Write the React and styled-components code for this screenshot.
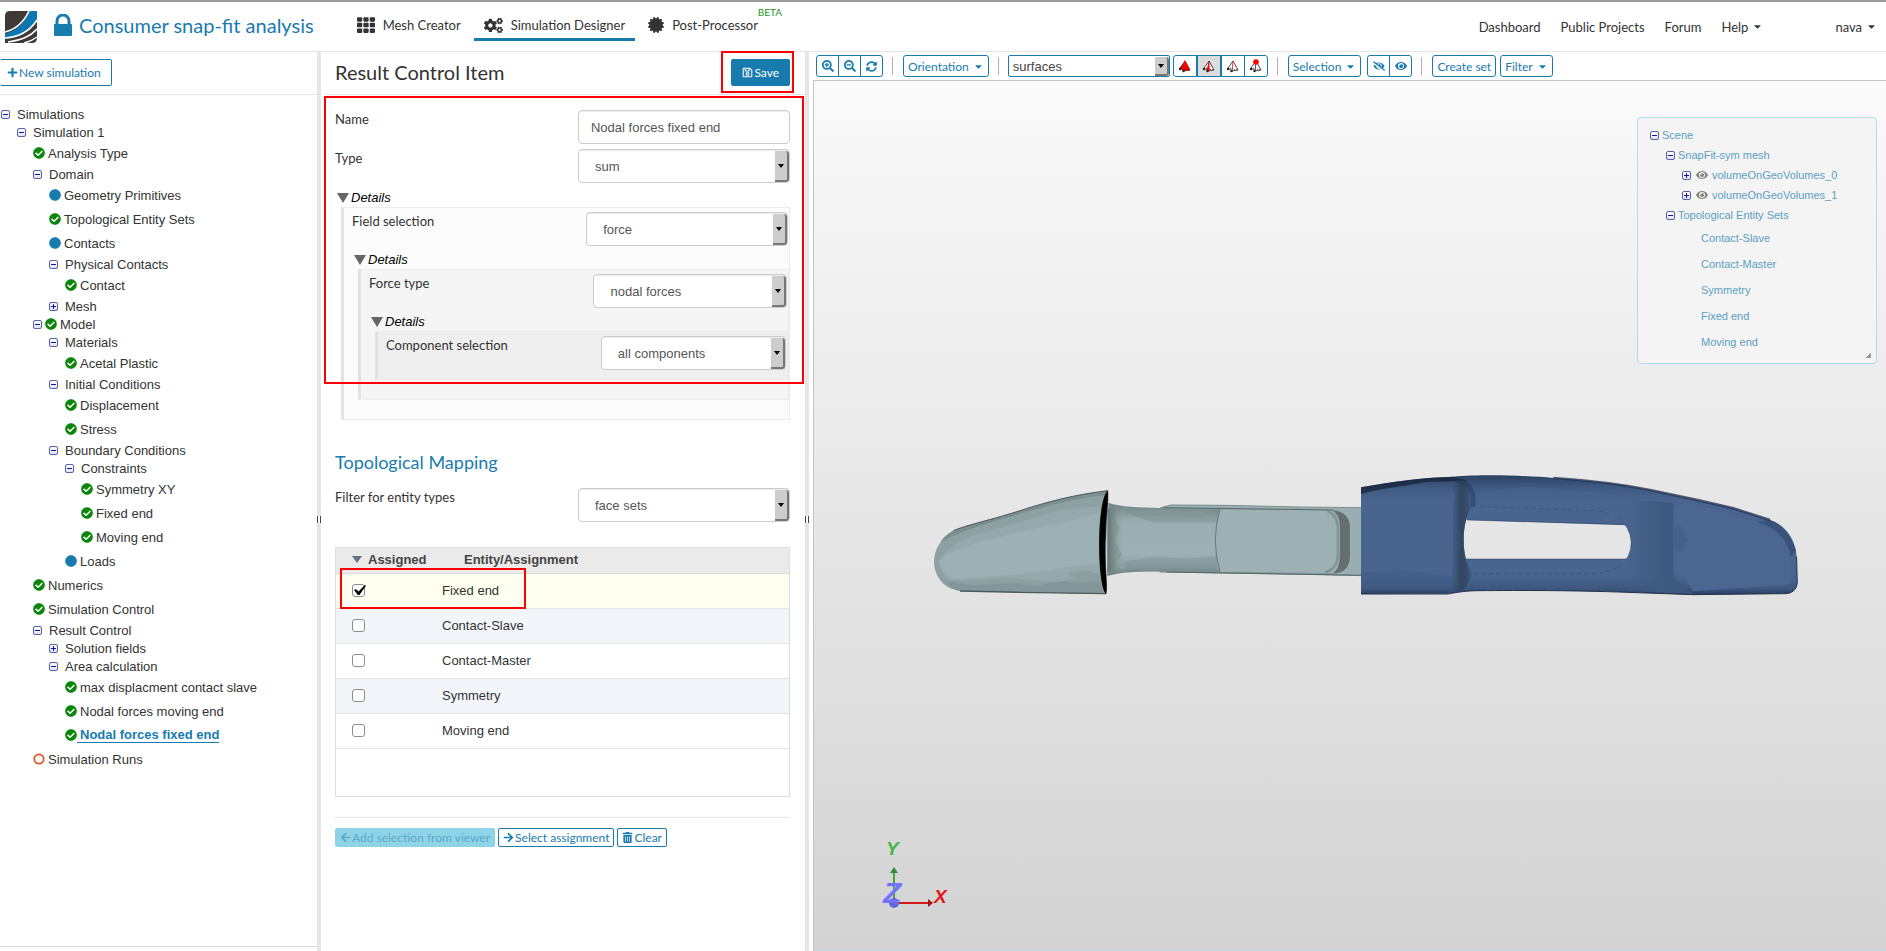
import { useState } from "react";
import styled, { createGlobalStyle, css } from "styled-components";
import {
  FaArrowLeft,
  FaArrowRight,
  FaCaretDown,
  FaCertificate,
  FaCheckCircle,
  FaCircle,
  FaCogs,
  FaEye,
  FaEyeSlash,
  FaPlus,
  FaRegSave,
  FaSearchMinus,
  FaSearchPlus,
  FaSyncAlt,
  FaTh,
  FaTrashAlt,
} from "react-icons/fa";

const BLUE = "#187bae";
const LINE = "#e5e5e5";
const SANS = `"Liberation Sans", Arial, sans-serif`;
const LATO = `Lato, "Open Sans", sans-serif`;

const GlobalStyle = createGlobalStyle`
  *, *::before, *::after { box-sizing: border-box; }
  body {
    margin: 0;
    background: #fff;
    color: #333;
    font-family: ${SANS};
    font-size: 13px;
  }
  button, input, select { font: inherit; margin: 0; }
  a { color: inherit; text-decoration: none; }
  h1, h2, ul { margin: 0; padding: 0; font-weight: normal; }
  ul { list-style: none; }
  svg { display: block; flex: none; }
`;

const Page = styled.div`
  display: flex;
  flex-direction: column;
  min-height: 100vh;
`;

/* ---------- header ---------- */

const Header = styled.header`
  display: flex;
  align-items: center;
  height: 52px;
  padding: 0 9px 0 5px;
  border-top: 2px solid #999;
  border-bottom: 1px solid ${LINE};
  font-family: ${LATO};
  font-size: 13px;
`;

const ProjectTitle = styled.h1`
  display: flex;
  align-items: center;
  gap: 7px;
  margin-left: 17px;
  padding-bottom: 3px;
  color: ${BLUE};
  font-size: 20px;
`;

const MainNav = styled.nav`
  display: flex;
  gap: 3px;
  margin-left: 33px;
`;

const NavTab = styled.a`
  position: relative;
  display: flex;
  align-items: center;
  gap: 8px;
  height: 29px;
  padding: 0 10px;
  border-bottom: 3px solid ${(props) => (props.$active ? BLUE : "transparent")};
`;

const Beta = styled.sup`
  position: absolute;
  top: -6px;
  right: -14px;
  color: #1f961f;
  font-size: 10px;
  line-height: 12px;
`;

const UserNav = styled.nav`
  display: flex;
  gap: 20px;
  margin-left: auto;
`;

const UserLink = styled.a`
  display: flex;
  align-items: center;
  gap: 4px;

  &:last-child {
    margin-left: 52px;
  }
`;

/* ---------- columns ---------- */

const Main = styled.main`
  display: flex;
  flex: 1;
`;

const Sidebar = styled.aside`
  display: flex;
  flex-direction: column;
  flex: 0 0 317px;
`;

const SidebarTop = styled.div`
  display: flex;
  align-items: center;
  height: 43px;
  padding-bottom: 1px;
  border-bottom: 1px solid ${LINE};
`;

const SidebarBottom = styled.div`
  height: 5px;
  margin-top: auto;
  border-top: 1px solid #d6d6d6;
`;

const Splitter = styled.div`
  display: flex;
  align-items: center;
  flex: 0 0 4px;
  background: #e6e6e6;

  &::after {
    content: "";
    width: 4px;
    height: 7px;
    margin-top: 36px;
    border: solid #444;
    border-width: 0 1px;
    background: #fff;
  }
`;

const Button = styled.button`
  display: inline-flex;
  align-items: center;
  justify-content: center;
  gap: 1px;
  height: 27px;
  padding: 0 10px;
  border: 1px solid ${BLUE};
  border-radius: 2px;
  background: ${(props) => (props.$primary ? BLUE : "#fff")};
  color: ${(props) => (props.$primary ? "#fff" : BLUE)};
  font-family: ${LATO};
  font-size: 12px;
  white-space: nowrap;

  ${(props) =>
    props.$small &&
    css`
      height: 19px;
      padding: 0 4px;
    `}

  &:disabled {
    border-color: #8fd3e7;
    background: #8fd3e7;
    color: #5aa9cb;
  }
`;

const NewSimulation = styled(Button)`
  padding-left: 7px;
  border-left: 0;
`;

/* ---------- tree ---------- */

const TreeList = styled.ul`
  padding-top: 10px;
`;

const TreeRow = styled.li`
  display: flex;
  align-items: center;
  height: ${(props) => (props.$leaf ? 24 : 18)}px;
  padding-left: ${(props) => props.$level * 16 + 1}px;
  white-space: nowrap;
`;

const TreeLabel = styled.a`
  margin-left: ${(props) => (props.$wide ? 7 : 3)}px;

  ${(props) =>
    props.$selected &&
    css`
      margin-left: 0;
      padding-left: 3px;
      color: ${BLUE};
      font-weight: bold;
      border-bottom: 1px solid ${BLUE};
    `}
`;

const ToggleButton = styled.button`
  position: relative;
  width: 9px;
  height: 9px;
  padding: 0;
  border: 1px solid #5560b0;
  border-radius: 2px;
  background: linear-gradient(#fff, #dfe3ec);

  &::before,
  &::after {
    content: "";
    position: absolute;
    top: 3px;
    left: 1px;
    width: 5px;
    height: 1px;
    background: #1414a8;
  }

  &::after {
    display: ${(props) => (props.$open ? "none" : "block")};
    top: 1px;
    left: 3px;
    width: 1px;
    height: 5px;
  }
`;

const StatusIcon = styled.span`
  display: flex;
  color: ${(props) => props.$color};
  margin-left: ${(props) => (props.$afterToggle ? 3 : 0)}px;
`;

/* ---------- control item form ---------- */

const Editor = styled.section`
  flex: 0 0 484px;
  padding-bottom: 40px;
`;

const EditorTop = styled.div`
  display: flex;
  align-items: center;
  justify-content: space-between;
  height: 43px;
  margin-left: 4px;
  padding: 0 15px 1px 10px;
  border-bottom: 1px solid ${LINE};
`;

const EditorTitle = styled.h2`
  padding-bottom: 1px;
  font-family: ${LATO};
  font-size: 20px;
`;

const Highlight = styled.span`
  position: absolute;
  inset: ${(props) => props.$inset};
  border: 2px solid #f00;
  pointer-events: none;
`;

const Anchor = styled.div`
  position: relative;
  display: flex;
`;

const EditorBody = styled.div`
  padding: 15px 15px 0 14px;
`;

const Form = styled.div`
  position: relative;
`;

const FieldRow = styled.div`
  display: flex;
  justify-content: space-between;
  align-items: flex-start;

  & + & {
    margin-top: 5px;
  }
`;

const FieldLabel = styled.label`
  font-family: ${LATO};
  font-size: 13px;
  line-height: 18px;
`;

const fieldBox = css`
  height: 34px;
  border: 1px solid #ccc;
  border-radius: 4px;
  background: #fff;
  color: #555;
  box-shadow: inset 0 1px 1px rgba(0, 0, 0, 0.08);
`;

const TextField = styled.input`
  ${fieldBox}
  width: 46.6%;
  padding: 0 12px;
`;

const SelectWrap = styled.div`
  position: relative;
  width: 46.6%;
`;

const SelectBox = styled.select`
  ${fieldBox}
  display: block;
  width: 100%;
  padding: 0 20px 0 16px;
  appearance: none;
`;

const SelectArrow = styled.span`
  position: absolute;
  top: 2px;
  right: 1px;
  bottom: 1px;
  display: flex;
  align-items: center;
  justify-content: center;
  width: 14px;
  border: solid #777;
  border-width: 0 2px 2px 0;
  border-radius: 0 3px 3px 0;
  background: #cdcdcd;
  pointer-events: none;

  &::after {
    content: "";
    border: 3px solid transparent;
    border-top: 4px solid #000;
    border-bottom: 0;
  }
`;

const DetailsToggle = styled.button`
  display: flex;
  align-items: center;
  gap: 2px;
  height: 24px;
  padding: 6px 0 0 2px;
  border: 0;
  background: none;
  color: #000;
  font-style: italic;
  line-height: 18px;

  &::before {
    content: "";
    border: 6px solid transparent;
    border-top: 10px solid #666;
    border-bottom: 0;
  }
`;

const Nested = styled.div`
  margin-left: 6px;
  padding: 4px 1px ${(props) => (props.$depth === 3 ? 9 : 19)}px 8px;
  border: 1px solid #ececec;
  border-left: 3px solid #e2e2e2;
  background: ${(props) => ["#fff", "#fcfcfc", "#f5f5f5", "#efefef"][props.$depth]};

  & & {
    margin-right: -1px;
  }

  ${SelectWrap} {
    width: 46.3%;
  }

  ${DetailsToggle} {
    height: 23px;
    padding-top: 5px;
  }
`;

const SubTitle = styled.h2`
  margin: 31px 0 15px;
  color: ${BLUE};
  font-family: ${LATO};
  font-size: 18px;
  line-height: 22px;
`;

/* ---------- assignment table ---------- */

const TableFrame = styled.div`
  min-height: 250px;
  margin-top: 25px;
  border: 1px solid #ddd;
`;

const Table = styled.table`
  width: 100%;
  border-collapse: collapse;
  text-align: left;
`;

const HeadCell = styled.th`
  width: ${(props) => props.$width || "auto"};
  height: 25px;
  padding: 0 0 1px ${(props) => props.$pad}px;
  border-bottom: 1px solid #ddd;
  background: #eaeaea;
  color: #444;
`;

const SortButton = styled.button`
  display: flex;
  align-items: center;
  gap: 6px;
  padding: 0;
  border: 0;
  background: none;
  color: inherit;
  font-weight: bold;

  &::before {
    content: "";
    border: 5px solid transparent;
    border-top: 7px solid #667385;
    border-bottom: 0;
  }
`;

const BodyRow = styled.tr`
  height: 35px;
  border-bottom: 1px solid ${LINE};
  background: ${(props) => (props.$checked ? "#ffffef" : "#fff")};

  &:nth-child(even) {
    background: #f2f6fb;
  }
`;

const BodyCell = styled.td`
  position: relative;
  padding: 0 0 0 ${(props) => props.$pad}px;
`;

const CheckBox = styled.input`
  position: relative;
  display: block;
  width: 13px;
  height: 13px;
  appearance: none;
  border: 1px solid #8c8c8c;
  border-radius: 3px;
  background: #fff;

  &:checked::after {
    content: "";
    position: absolute;
    top: 0;
    left: 1px;
    width: 12px;
    height: 10px;
    background: #000;
    clip-path: polygon(0 50%, 15% 40%, 38% 65%, 90% 0, 100% 8%, 45% 100%, 32% 100%);
  }
`;

const Actions = styled.div`
  display: flex;
  gap: 3px;
  margin-top: 20px;
  padding-top: 10px;
  border-top: 1px solid ${LINE};
`;

/* ---------- viewer ---------- */

const Viewer = styled.section`
  display: flex;
  flex-direction: column;
  flex: 1;
  min-width: 0;
  padding-left: 4px;
`;

const Toolbar = styled.div`
  display: flex;
  align-items: center;
  height: 28px;
  padding: 0 3px;
`;

const ButtonGroup = styled.div`
  display: flex;
  margin-right: ${(props) => props.$space || 0}px;
`;

const ToolButton = styled.button`
  display: flex;
  align-items: center;
  justify-content: center;
  gap: 4px;
  height: 22px;
  min-width: ${(props) => props.$width || 23}px;
  padding: 0 ${(props) => (props.$text ? 4 : 0)}px;
  border: 1px solid ${BLUE};
  border-radius: 3px;
  background: ${(props) => (props.$pressed ? "#dcdcdc" : "#fff")};
  color: ${BLUE};
  font-family: ${LATO};
  font-size: 12px;
  white-space: nowrap;

  ${ButtonGroup} > & + & {
    margin-left: -1px;
  }
  ${ButtonGroup} > &:not(:first-child) {
    border-top-left-radius: 0;
    border-bottom-left-radius: 0;
  }
  ${ButtonGroup} > &:not(:last-child) {
    border-top-right-radius: 0;
    border-bottom-right-radius: 0;
  }
`;

const Divider = styled.span`
  width: 1px;
  height: 18px;
  margin: 0 10px 0 9px;
  background: #b9aeb2;
`;

const ModeWrap = styled.div`
  position: relative;
  width: 162px;
  margin: 0 3px 0 -1px;
`;

const ModeSelect = styled.select`
  display: block;
  width: 100%;
  height: 22px;
  padding: 0 20px 0 4px;
  border: 1px solid ${BLUE};
  border-radius: 2px;
  background: #fff;
  color: #444;
  appearance: none;
`;

const Canvas = styled.div`
  position: relative;
  flex: 1;
  border: solid #c4c4c4;
  border-width: 1px 0 0 1px;
  border-bottom: 1px solid #c3d9de;
  background: linear-gradient(#fafafa, #d3d3d3);
`;

const ModelView = styled.svg`
  position: absolute;
  width: 100%;
  height: 100%;
`;

const Axes = styled.svg`
  position: absolute;
  left: 66px;
  bottom: 39px;
  font-family: ${SANS};
`;

const ScenePanel = styled.div`
  position: absolute;
  top: 36px;
  right: 9px;
  width: 240px;
  padding: 7px 0 8px 12px;
  border: 1px solid #b5dbe7;
  border-radius: 4px;
  background: #f4f4f4;
  color: #5a9fc2;
  font-size: 11px;

  &::after {
    content: "";
    position: absolute;
    right: 5px;
    bottom: 5px;
    width: 6px;
    height: 6px;
    background: linear-gradient(135deg, transparent 50%, #999 50%);
  }
`;

const SceneRow = styled.li`
  display: flex;
  align-items: center;
  gap: 3px;
  height: ${(props) => (props.$leaf ? 26 : 20)}px;
  padding-left: ${(props) => props.$indent}px;
`;

const SceneEye = styled(FaEye)`
  margin: 0 1px 0 2px;
  color: #85857c;
`;

const TREE = [
  [0, "Simulations", "open"],
  [1, "Simulation 1", "open"],
  [2, "Analysis Type", null, "ok"],
  [2, "Domain", "open"],
  [3, "Geometry Primitives", null, "dot"],
  [3, "Topological Entity Sets", null, "ok"],
  [3, "Contacts", null, "dot"],
  [3, "Physical Contacts", "open"],
  [4, "Contact", null, "ok"],
  [3, "Mesh", "closed"],
  [2, "Model", "open", "ok"],
  [3, "Materials", "open"],
  [4, "Acetal Plastic", null, "ok"],
  [3, "Initial Conditions", "open"],
  [4, "Displacement", null, "ok"],
  [4, "Stress", null, "ok"],
  [3, "Boundary Conditions", "open"],
  [4, "Constraints", "open"],
  [5, "Symmetry XY", null, "ok"],
  [5, "Fixed end", null, "ok"],
  [5, "Moving end", null, "ok"],
  [4, "Loads", null, "dot"],
  [2, "Numerics", null, "ok"],
  [2, "Simulation Control", null, "ok"],
  [2, "Result Control", "open"],
  [3, "Solution fields", "closed"],
  [3, "Area calculation", "open"],
  [4, "max displacment contact slave", null, "ok"],
  [4, "Nodal forces moving end", null, "ok"],
  [4, "Nodal forces fixed end", null, "ok"],
  [2, "Simulation Runs", null, "empty"],
];

const RingIcon = ({ size }) => (
  <svg width={size} height={size} viewBox="0 0 12 12">
    <circle cx="6" cy="6" r="4.7" fill="none" stroke="currentColor" strokeWidth="1.8" />
  </svg>
);

const STATUS = {
  ok: { color: "#0a860a", Icon: FaCheckCircle },
  dot: { color: BLUE, Icon: FaCircle },
  empty: { color: "#e2572b", Icon: RingIcon },
};

const SETS = ["Contact-Slave", "Contact-Master", "Symmetry", "Fixed end", "Moving end"];
const ENTITIES = ["Fixed end", "Contact-Slave", "Contact-Master", "Symmetry", "Moving end"];

const Status = ({ type, afterToggle }) => {
  const { color, Icon } = STATUS[type];
  return (
    <StatusIcon $color={color} $afterToggle={afterToggle}>
      <Icon size={12} />
    </StatusIcon>
  );
};

const Toggle = ({ open, label }) => (
  <ToggleButton type="button" $open={open} aria-expanded={!!open} aria-label={label} />
);

const Logo = () => (
  <svg width="32" height="32" viewBox="0 0 32 32" aria-label="Logo">
    <path d="M5 0H32V27Q32 32 27 32H0V5Q0 0 5 0Z" fill="#403a37" />
    <path d="M24 0H32V9C25 21 14 27 0 28V23C12 19 20 12 24 0Z" fill="#0b76b0" />
    <path d="M24 0C19 11 12 18 0 21" fill="none" stroke="#fff" strokeWidth="1.6" />
    <path d="M32 9C25 20 14 26 0 27" fill="none" stroke="#fff" strokeWidth="1.6" />
    <path d="M32 18C25 26 16 29 3 31" fill="none" stroke="#fff" strokeWidth="1.6" />
    <path d="M32 26C28 29 24 31 19 32" fill="none" stroke="#fff" strokeWidth="1.4" />
  </svg>
);

// tetrahedron with the picked entity kind painted red
const Tetra = ({ mode }) => (
  <svg width="14" height="14" viewBox="0 0 14 14" fill="none" stroke="#222">
    <path d="M7 2L2 9L6 12L12 11Z" fill={mode === "volume" ? "#f00" : "#fff"} strokeWidth="0.8" />
    {mode === "volume" && <path d="M7 1L3 10L6 12L12 11Z" fill="#f00" stroke="none" />}
    {mode !== "volume" && <path d="M7 2L6 12" stroke={mode === "edge" ? "#f00" : "#222"} strokeWidth="0.8" />}
    <path d="M2 9L12 11" strokeDasharray="1 1" strokeWidth="0.8" />
    {mode === "face" && <path d="M7 2L4.5 11L8 12Z" fill="#f00" stroke="none" />}
    <circle cx="2" cy="10" r="1.2" fill="#222" stroke="none" />
    <circle cx="5.5" cy="12" r="1.2" fill="#222" stroke="none" />
    {mode === "point" && <circle cx="7" cy="3" r="2.8" fill="#f00" stroke="none" />}
  </svg>
);

const SelectField = ({ id, label, value }) => (
  <FieldRow>
    <FieldLabel htmlFor={id}>{label}</FieldLabel>
    <SelectWrap>
      <SelectBox id={id} defaultValue={value}>
        <option>{value}</option>
      </SelectBox>
      <SelectArrow />
    </SelectWrap>
  </FieldRow>
);

const SnapFitModel = () => (
  <ModelView viewBox="814 81 1072 869" role="img" aria-label="Snap fit mesh">
    <defs>
      <linearGradient id="shaft" x1="0" y1="0" x2="0" y2="1">
        <stop offset="0" stopColor="#6f8282" />
        <stop offset="0.13" stopColor="#849798" />
        <stop offset="0.26" stopColor="#9caeb2" />
        <stop offset="0.7" stopColor="#9db0b4" />
        <stop offset="0.88" stopColor="#8b9ea0" />
        <stop offset="1" stopColor="#687a7a" />
      </linearGradient>
      <linearGradient id="sleeve" x1="0" y1="0" x2="0" y2="1">
        <stop offset="0" stopColor="#2c4162" />
        <stop offset="0.1" stopColor="#3f5a82" />
        <stop offset="0.22" stopColor="#49658f" />
        <stop offset="0.84" stopColor="#48648f" />
        <stop offset="0.95" stopColor="#3d577f" />
        <stop offset="1" stopColor="#2a3e5d" />
      </linearGradient>
      <linearGradient id="bend" x1="0" y1="0" x2="1" y2="0">
        <stop offset="0" stopColor="#3f5a80" stopOpacity="0" />
        <stop offset="0.55" stopColor="#31455f" />
        <stop offset="0.8" stopColor="#36506f" />
        <stop offset="1" stopColor="#3f5a80" stopOpacity="0" />
      </linearGradient>
      <linearGradient id="hollow" x1="0" y1="0" x2="1" y2="0">
        <stop offset="0" stopColor="#3f5a80" stopOpacity="0" />
        <stop offset="0.5" stopColor="#3f5a80" />
        <stop offset="1" stopColor="#3d577c" />
      </linearGradient>
      <linearGradient id="neck" x1="0" y1="0" x2="1" y2="0">
        <stop offset="0" stopColor="#5f7272" />
        <stop offset="1" stopColor="#93a6a8" stopOpacity="0" />
      </linearGradient>
    </defs>

    <g transform="translate(920 460) scale(0.3333)">
      <path d="M720 144L752 135L920 136L1140 141L1325 143V347L1200 344L720 336Z" fill="#9aaeb2" stroke="#7c9090" strokeWidth="3" />
      <path d="M565 128C600 141 660 142 720 144L895 147L1240 150Q1290 155 1290 200V290Q1290 338 1240 341L960 339L740 335C680 333 600 335 562 348Z" fill="url(#shaft)" />
      <path d="M566 150L600 205L585 240L606 285L566 335Z" fill="#71878a" opacity="0.4" />
      <rect x="562" y="145" width="50" height="190" fill="url(#neck)" />
      <path d="M620 158L700 160L840 161L895 148V188H700Z" fill="#74898a" opacity="0.35" />
      <path d="M610 305L700 290L800 296L890 288V335H620Z" fill="#74898a" opacity="0.3" />
      <path d="M900 148L1240 151Q1288 155 1290 200V290Q1288 338 1240 340L900 336Q872 240 900 148Z" fill="#9db0b4" />
      <path d="M1236 151Q1288 155 1290 200V290Q1288 338 1240 340Q1258 325 1260 290V200Q1258 160 1236 151Z" fill="#64706f" />
      <path d="M1222 153Q1250 162 1254 200V290Q1250 328 1215 338" fill="none" stroke="#82969a" strokeWidth="8" />
      <path d="M900 148Q872 240 900 336" fill="none" stroke="#647878" strokeWidth="3" />
      <path d="M730 143L1240 150M740 336L1325 346" fill="none" stroke="#566868" strokeWidth="3" />

      <path d="M562 92C460 105 390 123 300 152C220 178 140 195 100 212C60 235 42 270 42 310C45 350 70 386 120 393L300 397L557 401Z" fill="#8da1a3" />
      <path d="M562 92C460 105 390 123 300 152C220 178 140 195 100 212C80 222 70 233 62 246C110 220 190 192 290 165C380 137 470 115 556 106Z" fill="#7b8f90" />
      <path d="M552 138L420 150L290 190L180 220Q100 245 70 285Q46 330 90 362L200 358L430 335L548 345Z" fill="#95a9ac" />
      <path d="M548 155L440 185L300 215L170 250Q95 272 58 300Q58 340 100 356L240 348L330 340L440 322L542 312Z" fill="#9db0b4" />
      <path d="M75 362L160 376L280 368L360 378L410 360L470 368L545 362L557 401L300 397L120 393Q95 388 75 362Z" fill="#83979a" />
      <path d="M240 350L430 325L480 352L410 366Z" fill="#95a9ac" />
      <path d="M440 338L500 330L545 345V365L480 366Z" fill="#8b9fa1" />
      <path d="M120 393L300 397L557 401" fill="none" stroke="#4b5b5b" strokeWidth="4" />
      <path d="M562 92C460 105 390 123 300 152C220 178 140 195 100 212" fill="none" stroke="#4b5b5b" strokeWidth="3" />
      <path d="M563 92C530 130 532 370 558 401C564 370 550 300 557 220C558 150 566 130 563 92Z" fill="#000" stroke="#000" strokeWidth="2" />
    </g>

    <g transform="translate(1340 460) scale(0.3333)">
      <path d="M380 138H760L870 190V196L380 180Z" fill="#49658f" />
      <path d="M375 297H860L820 345H385Z" fill="#49658f" />
      <path d="M380 180L860 194M375 297H860" stroke="#2c3f5e" strokeWidth="2" opacity="0.7" />
      <path
        fillRule="evenodd"
        fill="url(#sleeve)"
        d="M63 82C160 64 260 52 340 50C420 43 560 46 640 54C760 62 840 72 930 90L1080 122L1180 145L1290 180C1340 195 1368 245 1370 290L1372 370Q1368 398 1340 401L1060 404L860 397C700 391 540 391 420 392C380 392 350 397 325 401L63 402ZM398 139C362 180 362 300 398 341H750C830 341 872 305 873 248C872 195 830 155 760 152Z"
      />
      <path d="M870 120L1000 128V350L1060 402L860 394V320Q885 240 860 175Z" fill="url(#hollow)" />
      <path d="M1000 150L1040 126L1250 186Q1345 205 1352 290V374L1060 394L1030 350L1000 330Z" fill="#4a6691" />
      <path d="M1290 180Q1340 196 1368 270L1352 290Q1340 212 1250 186Z" fill="#38527a" />
      <path d="M1000 205L1020 195L1042 240L1025 280L1000 265Z" fill="#45608a" />
      <path d="M320 62L400 62C385 110 400 125 398 139C362 180 362 300 398 341L375 388L325 400C350 330 330 180 345 100Z" fill="url(#bend)" />
      <path d="M63 82C160 64 260 52 340 50L385 62L260 66L100 92L63 102Z" fill="#16233a" opacity="0.75" />
      <path d="M345 60Q410 70 398 139" fill="none" stroke="#263a58" strokeWidth="14" opacity="0.5" />
      <path d="M410 100L560 80L800 100L860 120L820 142L700 130L420 132Z" fill="#49658f" opacity="0.6" />
      <path d="M63 340L180 330L340 350L325 378L63 388Z" fill="#405b85" opacity="0.5" />
      <path d="M640 54C760 62 840 72 930 90L1080 122L1180 145L1290 180" fill="none" stroke="#253857" strokeWidth="8" opacity="0.8" />
      <path d="M398 139L760 152C830 155 872 195 873 248C872 305 830 341 750 341H398" fill="none" stroke="#22334d" strokeWidth="2" opacity="0.4" strokeDasharray="14 8" />
      <path d="M63 402H325C350 397 380 392 420 392C540 391 700 391 860 397L1060 404L1340 401Q1368 398 1372 370L1370 290" fill="none" stroke="#22334d" strokeWidth="3" />
    </g>
  </ModelView>
);

const AxesWidget = () => (
  <Axes width="76" height="80" viewBox="0 -10 76 80" fontSize="19" fontWeight="bold" fontStyle="italic">
    <path d="M14 62V31" stroke="#45a045" strokeWidth="2" />
    <path d="M10 32L14 26L18 32Z" fill="#3c8a3c" />
    <path d="M14 62H48" stroke="#d61a1a" strokeWidth="2" />
    <path d="M48 58L53 62L48 66Z" fill="#a51414" />
    <circle cx="14" cy="62" r="5" fill="#6464e0" />
    <text x="6" y="14" fill="#43b843">Y</text>
    <text x="54" y="62" fill="#e21818">X</text>
    <text x="3" y="62" fontSize="30" fill="#7373ff">Z</text>
  </Axes>
);

const App = () => {
  const [assigned, setAssigned] = useState(["Fixed end"]);

  const toggleEntity = (name) =>
    setAssigned((list) => (list.includes(name) ? list.filter((n) => n !== name) : [...list, name]));

  return (
    <Page>
      <GlobalStyle />
      <Header>
        <Logo />
        <ProjectTitle>
          <svg width="18" height="22" viewBox="0 0 18 22">
            <path d="M3 11V7a6 6 0 0 1 12 0v4" fill="none" stroke={BLUE} strokeWidth="3" />
            <rect y="10" width="18" height="12" rx="1" fill={BLUE} />
          </svg>
          Consumer snap-fit analysis
        </ProjectTitle>
        <MainNav>
          <NavTab href="#mesh"><FaTh size={18} /> Mesh Creator</NavTab>
          <NavTab href="#simulation" $active><FaCogs size={19} /> Simulation Designer</NavTab>
          <NavTab href="#post">
            <FaCertificate size={16} /> Post-Processor
            <Beta>BETA</Beta>
          </NavTab>
        </MainNav>
        <UserNav>
          <UserLink href="#dashboard">Dashboard</UserLink>
          <UserLink href="#projects">Public Projects</UserLink>
          <UserLink href="#forum">Forum</UserLink>
          <UserLink href="#help">Help <FaCaretDown size={11} /></UserLink>
          <UserLink href="#user">nava <FaCaretDown size={11} /></UserLink>
        </UserNav>
      </Header>

      <Main>
        <Sidebar>
          <SidebarTop>
            <NewSimulation type="button"><FaPlus size={11} />New simulation</NewSimulation>
          </SidebarTop>
          <TreeList>
            {TREE.map(([level, label, toggle, status], index) => (
              <TreeRow key={index} $level={level} $leaf={!toggle}>
                {toggle && <Toggle open={toggle === "open"} label={label} />}
                {status && <Status type={status} afterToggle={!!toggle} />}
                <TreeLabel href="#tree" $wide={!status} $selected={label === "Nodal forces fixed end"}>
                  {label}
                </TreeLabel>
              </TreeRow>
            ))}
          </TreeList>
          <SidebarBottom />
        </Sidebar>

        <Splitter />

        <Editor>
          <EditorTop>
            <EditorTitle>Result Control Item</EditorTitle>
            <Anchor>
              <Button type="button" $primary><FaRegSave size={11} />Save</Button>
              <Highlight $inset="-8px -4px -7px -10px" />
            </Anchor>
          </EditorTop>

          <EditorBody>
            <Form>
              <FieldRow>
                <FieldLabel htmlFor="name">Name</FieldLabel>
                <TextField id="name" defaultValue="Nodal forces fixed end" />
              </FieldRow>
              <SelectField id="type" label="Type" value="sum" />
              <DetailsToggle type="button">Details</DetailsToggle>
              <Nested $depth={1}>
                <SelectField id="field" label="Field selection" value="force" />
                <DetailsToggle type="button">Details</DetailsToggle>
                <Nested $depth={2}>
                  <SelectField id="force" label="Force type" value="nodal forces" />
                  <DetailsToggle type="button">Details</DetailsToggle>
                  <Nested $depth={3}>
                    <SelectField id="component" label="Component selection" value="all components" />
                  </Nested>
                </Nested>
              </Nested>
              <Highlight $inset="-14px -14px 36px -11px" />
            </Form>

            <SubTitle>Topological Mapping</SubTitle>
            <SelectField id="filter" label="Filter for entity types" value="face sets" />

            <TableFrame>
              <Table>
                <thead>
                  <tr>
                    <HeadCell $pad={16} $width="106px"><SortButton type="button">Assigned</SortButton></HeadCell>
                    <HeadCell $pad={22}>Entity/Assignment</HeadCell>
                  </tr>
                </thead>
                <tbody>
                  {ENTITIES.map((name, index) => (
                    <BodyRow key={name} $checked={assigned.includes(name)}>
                      <BodyCell $pad={16}>
                        <CheckBox
                          type="checkbox"
                          id={`entity-${index}`}
                          checked={assigned.includes(name)}
                          onChange={() => toggleEntity(name)}
                        />
                        {index === 0 && <Highlight $inset="-6px -84px -1px 4px" />}
                      </BodyCell>
                      <BodyCell $pad={0}>
                        <label htmlFor={`entity-${index}`}>{name}</label>
                      </BodyCell>
                    </BodyRow>
                  ))}
                </tbody>
              </Table>
            </TableFrame>

            <Actions>
              <Button type="button" $small disabled><FaArrowLeft size={11} />Add selection from viewer</Button>
              <Button type="button" $small><FaArrowRight size={11} />Select assignment</Button>
              <Button type="button" $small><FaTrashAlt size={11} />Clear</Button>
            </Actions>
          </EditorBody>
        </Editor>

        <Splitter />

        <Viewer>
          <Toolbar>
            <ButtonGroup>
              <ToolButton type="button" aria-label="Zoom in"><FaSearchPlus size={12} /></ToolButton>
              <ToolButton type="button" aria-label="Zoom out"><FaSearchMinus size={12} /></ToolButton>
              <ToolButton type="button" aria-label="Reset view"><FaSyncAlt size={11} /></ToolButton>
            </ButtonGroup>
            <Divider />
            <ToolButton type="button" $text>Orientation <FaCaretDown size={11} /></ToolButton>
            <Divider />
            <ModeWrap>
              <ModeSelect aria-label="Render mode" defaultValue="surfaces">
                <option>surfaces</option>
              </ModeSelect>
              <SelectArrow />
            </ModeWrap>
            <ButtonGroup>
              <ToolButton type="button" $width={24} aria-label="Pick volumes"><Tetra mode="volume" /></ToolButton>
              <ToolButton type="button" $width={24} aria-label="Pick faces" $pressed><Tetra mode="face" /></ToolButton>
              <ToolButton type="button" $width={24} aria-label="Pick edges"><Tetra mode="edge" /></ToolButton>
              <ToolButton type="button" $width={24} aria-label="Pick points"><Tetra mode="point" /></ToolButton>
            </ButtonGroup>
            <Divider />
            <ButtonGroup $space={6}>
              <ToolButton type="button" $text>Selection <FaCaretDown size={11} /></ToolButton>
            </ButtonGroup>
            <ButtonGroup>
              <ToolButton type="button" aria-label="Hide selection"><FaEyeSlash size={12} /></ToolButton>
              <ToolButton type="button" aria-label="Show selection"><FaEye size={12} /></ToolButton>
            </ButtonGroup>
            <Divider />
            <ButtonGroup $space={4}>
              <ToolButton type="button" $text>Create set</ToolButton>
            </ButtonGroup>
            <ToolButton type="button" $text>Filter <FaCaretDown size={11} /></ToolButton>
          </Toolbar>

          <Canvas>
            <SnapFitModel />
            <AxesWidget />
            <ScenePanel>
              <ul>
                <SceneRow $indent={0}><Toggle open label="Scene" />Scene</SceneRow>
                <SceneRow $indent={16}><Toggle open label="SnapFit-sym mesh" />SnapFit-sym mesh</SceneRow>
                <SceneRow $indent={32}><Toggle label="volume 0" /><SceneEye size={12} />volumeOnGeoVolumes_0</SceneRow>
                <SceneRow $indent={32}><Toggle label="volume 1" /><SceneEye size={12} />volumeOnGeoVolumes_1</SceneRow>
                <SceneRow $indent={16}><Toggle open label="Topological Entity Sets" />Topological Entity Sets</SceneRow>
                {SETS.map((name) => (
                  <SceneRow key={name} $indent={51} $leaf>{name}</SceneRow>
                ))}
              </ul>
            </ScenePanel>
          </Canvas>
        </Viewer>
      </Main>
    </Page>
  );
};

export default App;
